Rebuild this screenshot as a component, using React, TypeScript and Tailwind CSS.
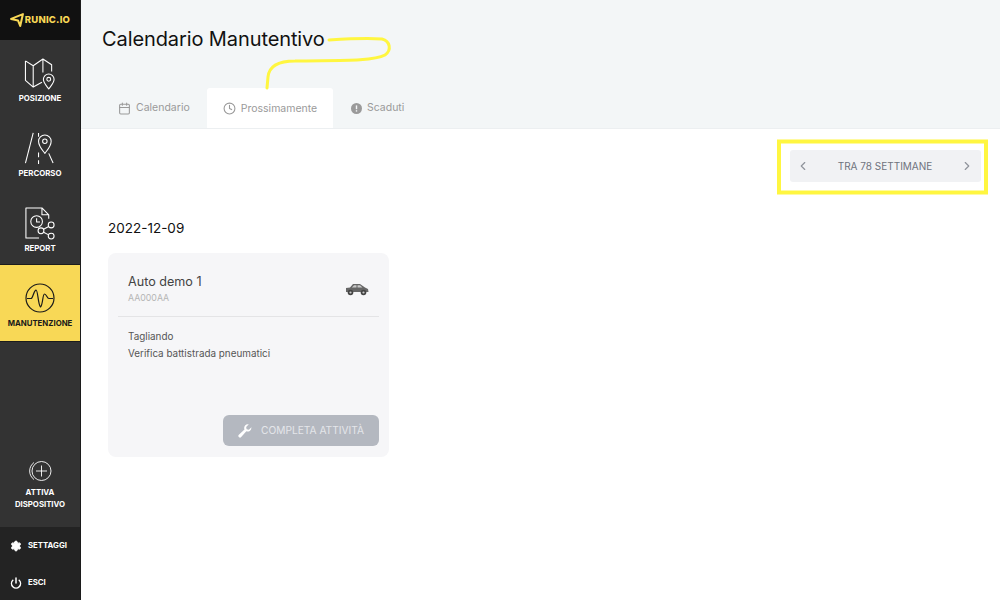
import React from 'react';
import { Calendar, Clock, ChevronLeft, ChevronRight, Settings, Power } from 'lucide-react';

const NavItem: React.FC<{ label: string; active?: boolean; children: React.ReactNode }> = ({ label, active, children }) => (
  <div className={`h-[76px] flex flex-col items-center ${active ? 'bg-[#f8d856] text-[#1a1a1a]' : 'text-white'}`}>
    <div className="h-[30px] mt-[18px] flex items-center justify-center">{children}</div>
    <span className="text-[7.800px] leading-[10px] font-bold mt-[5px]">{label}</span>
  </div>
);

const Sidebar = () => (
  <aside className="w-[81px] h-[600px] shrink-0 flex flex-col bg-[#333333] border-r border-[#1c1c1c] font-['Inter',sans-serif]">
    <div className="h-[40px] bg-[#111111] flex items-center justify-center gap-[1px] text-[#f8d856]">
      <svg width="14" height="14" viewBox="0 0 13 13" fill="none" stroke="currentColor" strokeWidth="1.900" strokeLinejoin="round">
        <path d="M1 5.500 L12 1 L9.500 12 L7.500 7 Z" />
      </svg>
      <span className="text-[9.500px] font-extrabold tracking-[0.200px]">RUNIC.IO</span>
    </div>

    <div className="h-[75px] flex flex-col items-center text-white">
      <svg className="mt-[17px]" width="32" height="33" viewBox="0 0 32 34" fill="none" stroke="currentColor" strokeWidth="1.100" strokeLinejoin="round">
        <path d="M1 4 L1 24 L9 31 L18 26 M1 4 L9 9 L19 2 L28 8 L28 15 M9 9 L9 31 M19 2 L19 16" />
        <path d="M25 33 C22 29 19.500 26.500 19.500 23 A5.500 5.500 0 0 1 30.500 23 C30.500 26.500 28 29 25 33 Z" />
        <circle cx="25" cy="23" r="2" />
      </svg>
      <span className="text-[7.800px] leading-[10px] font-bold mt-[3px]">POSIZIONE</span>
    </div>

    <div className="h-[75px] flex flex-col items-center text-white">
      <svg className="mt-[17px]" width="32" height="33" viewBox="0 0 32 34" fill="none" stroke="currentColor" strokeWidth="1.100" strokeLinejoin="round">
        <path d="M9 1 L1 32" />
        <path d="M14.500 1 V5 M14.500 21 V26 M14.500 29 V33" />
        <path d="M21 22 C18 18 14.500 14.500 14.500 9.500 A6.500 6.500 0 0 1 27.500 9.500 C27.500 14.500 24 18 21 22 Z" />
        <circle cx="21" cy="9.500" r="2.300" />
        <path d="M25 22 L29.500 32" />
      </svg>
      <span className="text-[7.800px] leading-[10px] font-bold mt-[3px]">PERCORSO</span>
    </div>

    <div className="h-[75px] flex flex-col items-center text-white border-b border-[#1c1c1c]">
      <svg className="mt-[17px]" width="32" height="33" viewBox="0 0 32 34" fill="none" stroke="currentColor" strokeWidth="1.100" strokeLinejoin="round">
        <path d="M15 32 H1.500 V1 H18 L25 8 V12 M18 1 V8 H25" />
        <circle cx="12.500" cy="15" r="6" />
        <path d="M12.500 11.500 V15.500 H16" />
        <circle cx="17" cy="24.500" r="3" />
        <circle cx="27.500" cy="18.500" r="3" />
        <circle cx="27.500" cy="30" r="3" />
        <path d="M19.700 23 L25 20 M19.700 26 L25 28.700" />
      </svg>
      <span className="text-[7.800px] leading-[10px] font-bold mt-[3px]">REPORT</span>
    </div>

    <NavItem label="MANUTENZIONE" active>
      <svg width="30" height="30" viewBox="0 0 30 30" fill="none" stroke="currentColor" strokeWidth="1.200" strokeLinejoin="round">
        <circle cx="15" cy="15" r="14" />
        <path d="M2 15.500 H6 C8 15.500 8.500 8 11 7 C13 7 13 22 15.500 24 C18 22 17.500 11 19.500 11 C21.500 11 22 15.500 24 15.500 H28" />
      </svg>
    </NavItem>

    <div className="flex-1 flex flex-col items-center justify-end text-white pb-[17px] border-t border-[#1c1c1c]">
      <svg width="24" height="22" viewBox="0 0 24 22" fill="none" stroke="currentColor" strokeWidth="0.900">
        <circle cx="13.500" cy="11" r="9.500" />
        <path d="M13.500 5.500 V16.500 M8 11 H19" />
        <path d="M6 2.500 A10.500 10.500 0 0 0 6 19.500" />
      </svg>
      <span className="text-[7.800px] leading-[12px] font-bold mt-[4px] text-center">
        ATTIVA
        <br />
        DISPOSITIVO
      </span>
    </div>

    <div className="h-[73px] bg-[#232323] text-white flex flex-col text-[7.800px] font-bold">
      <div className="h-[37px] flex items-center pl-[10px] gap-[6px]">
        <Settings size={12} fill="currentColor" strokeWidth={2} />
        <span>SETTAGGI</span>
      </div>
      <div className="h-[36px] pt-[1px] flex items-center pl-[10px] gap-[6px]">
        <Power size={12} strokeWidth={3} />
        <span>ESCI</span>
      </div>
    </div>
  </aside>
);

const Header = () => (
  <header className="h-[129px] bg-[#f3f6f7] border-b border-[#eceff1] flex flex-col justify-between pl-[21px]">
    <h1 className="text-[20px] leading-[24px] mt-[27px] text-[#111111] tracking-[-0.100px]">Calendario Manutentivo</h1>
    <nav className="flex h-[40px] text-[10.500px] text-[#9a9a9a]">
      <div className="w-[105px] flex items-center pl-[16px] gap-[5px]">
        <Calendar size={13} />
        <span>Calendario</span>
      </div>
      <div className="w-[126px] flex items-center justify-center gap-[5px] bg-white rounded-t-[3px] pt-[1px]">
        <Clock size={13} />
        <span>Prossimamente</span>
      </div>
      <div className="flex items-center pl-[18px] gap-[5px]">
        <svg width="11" height="11" viewBox="0 0 11 11">
          <circle cx="5.500" cy="5.500" r="5.500" fill="#9a9a9a" />
          <rect x="4.800" y="2.400" width="1.400" height="3.800" fill="#f3f6f7" />
          <rect x="4.800" y="7.200" width="1.400" height="1.400" fill="#f3f6f7" />
        </svg>
        <span>Scaduti</span>
      </div>
    </nav>
  </header>
);

const Card = () => (
  <div className="w-[281px] h-[204px] bg-[#f6f6f8] rounded-[8px] mt-[16px] flex flex-col">
    <div className="h-[64px] mx-[10px] border-b border-[#e4e4e6] flex items-start justify-between pl-[10px] pr-[10px] pt-[21px]">
      <div>
        <div className="text-[12.600px] leading-[16px] text-[#444444]">Auto demo 1</div>
        <div className="text-[8.800px] leading-[12px] mt-[2px] text-[#b5b5b5]">AA000AA</div>
      </div>
      <svg className="mt-[9px]" width="24" height="13" viewBox="0 0 24 13" fill="#666666">
        <path d="M1 5 L5 4.500 L8 1 H15 L20 4.500 L23 6 L23.500 9 H1 Z" />
        <circle cx="5.500" cy="9.500" r="2.800" fill="#444444" />
        <circle cx="18.500" cy="9.500" r="2.800" fill="#444444" />
        <circle cx="5.500" cy="9.500" r="1.100" fill="#c9c9c9" />
        <circle cx="18.500" cy="9.500" r="1.100" fill="#c9c9c9" />
        <path d="M9 2.200 H11.500 V4.500 H6.800 Z M12.500 2.200 H15 L17.500 4.500 H12.500 Z" fill="#c9c9c9" />
      </svg>
    </div>
    <div className="pl-[20px] pt-[11px] text-[9.900px] leading-[17px] text-[#555555]">
      <div>Tagliando</div>
      <div>Verifica battistrada pneumatici</div>
    </div>
    <div className="mt-auto mb-[11px] mr-[10px] self-end w-[156px] h-[31px] rounded-[6px] bg-[#b4b8c0] flex items-center pl-[15px] gap-[9px] text-white">
      <svg width="14" height="14" viewBox="0 0 24 24" fill="currentColor">
        <path d="M23 6.500a6.500 6.500 0 0 1-8.700 6.100L5.500 22.400a2.800 2.800 0 0 1-4-4l9.600-9A6.500 6.500 0 0 1 18.500.600L14 5.200l.7 4 4 .7L23 5.500z" />
      </svg>
      <span className="text-[10.200px] text-[#e4e6ea]">COMPLETA ATTIVITÀ</span>
    </div>
  </div>
);

export default function App() {
  return (
    <div className="relative w-[1000px] h-[600px] flex overflow-hidden bg-white font-['Inter',sans-serif]">
      <Sidebar />
      <main className="flex-1 flex flex-col">
        <Header />
        <div className="pl-[27px] pr-[19px]">
          <div className="flex justify-end mt-[21px]">
            <div className="w-[191px] h-[32px] bg-[#f1f2f4] rounded-[3px] flex items-center justify-between pl-[6px] pr-[7px] text-[#6f737d]">
              <ChevronLeft size={14} className="text-[#8f939b]" />
              <span className="text-[10px]">TRA 78 SETTIMANE</span>
              <ChevronRight size={14} className="text-[#8f939b]" />
            </div>
          </div>
          <div className="mt-[37px] text-[13.500px] leading-[18px] text-[#111111]">2022-12-09</div>
          <Card />
        </div>
      </main>

      {/* yellow annotations drawn over the page */}
      <svg className="absolute left-0 top-0 pointer-events-none" width="1000" height="600" fill="none" stroke="#fff640">
        <path
          d="M329 40 C345 39 370 38 382 39 C390 41 392 50 385 55 C372 62 330 60 295 61 C278 61 269 66 268 77 L267 88"
          strokeWidth="3"
          strokeLinecap="round"
        />
        <rect x="779" y="141.500" width="207" height="51" strokeWidth="4" />
      </svg>
    </div>
  );
}
